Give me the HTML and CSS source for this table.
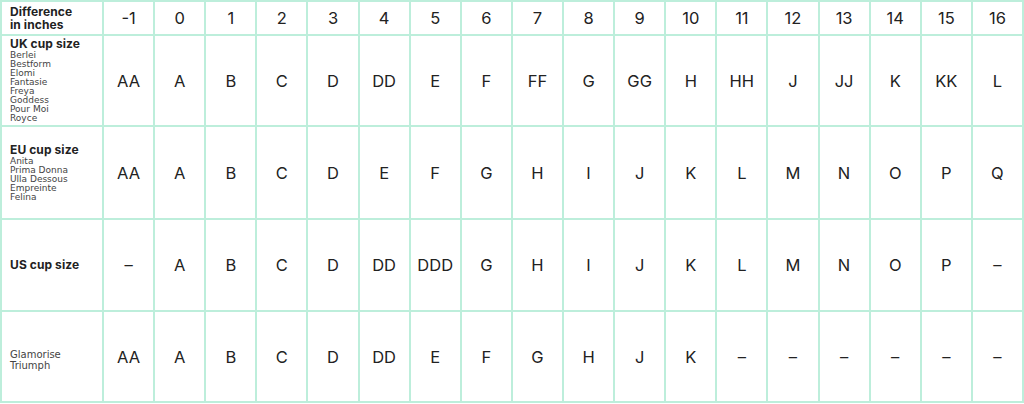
FILE: index.html
```html
<!DOCTYPE html>
<html>
<head>
<meta charset="utf-8">
<link rel="stylesheet" href="styles.css">
</head>
<body>
<table class="sizes">
  <colgroup><col class="label-col"></colgroup>
  <tr class="head">
    <th class="label"><span class="title">Difference<br>in inches</span></th>
    <td>-1</td><td>0</td><td>1</td><td>2</td><td>3</td><td>4</td><td>5</td><td>6</td><td>7</td><td>8</td><td>9</td><td>10</td><td>11</td><td>12</td><td>13</td><td>14</td><td>15</td><td>16</td>
  </tr>
  <tr class="row r1">
    <th class="label"><span class="title">UK cup size</span><span class="brands">Berlei<br>Bestform<br>Elomi<br>Fantasie<br>Freya<br>Goddess<br>Pour Moi<br>Royce</span></th>
    <td>AA</td><td>A</td><td>B</td><td>C</td><td>D</td><td>DD</td><td>E</td><td>F</td><td>FF</td><td>G</td><td>GG</td><td>H</td><td>HH</td><td>J</td><td>JJ</td><td>K</td><td>KK</td><td>L</td>
  </tr>
  <tr class="row r2">
    <th class="label"><span class="title">EU cup size</span><span class="brands">Anita<br>Prima Donna<br>Ulla Dessous<br>Empreinte<br>Felina</span></th>
    <td>AA</td><td>A</td><td>B</td><td>C</td><td>D</td><td>E</td><td>F</td><td>G</td><td>H</td><td>I</td><td>J</td><td>K</td><td>L</td><td>M</td><td>N</td><td>O</td><td>P</td><td>Q</td>
  </tr>
  <tr class="row r3">
    <th class="label"><span class="title">US cup size</span></th>
    <td>–</td><td>A</td><td>B</td><td>C</td><td>D</td><td>DD</td><td>DDD</td><td>G</td><td>H</td><td>I</td><td>J</td><td>K</td><td>L</td><td>M</td><td>N</td><td>O</td><td>P</td><td>–</td>
  </tr>
  <tr class="row r4">
    <th class="label"><span class="brands">Glamorise<br>Triumph</span></th>
    <td>AA</td><td>A</td><td>B</td><td>C</td><td>D</td><td>DD</td><td>E</td><td>F</td><td>G</td><td>H</td><td>J</td><td>K</td><td>–</td><td>–</td><td>–</td><td>–</td><td>–</td><td>–</td>
  </tr>
</table>
</body>
</html>
```
FILE: styles.css
```css
html, body {
  margin: 0;
  padding: 0;
  background: #ffffff;
}
.sizes {
  width: 1024px;
  border-collapse: collapse;
  table-layout: fixed;
  font-family: "Inter", "Liberation Sans", sans-serif;
  color: #222222;
}
.label-col {
  width: 102px;
}
.sizes th,
.sizes td {
  border: 2px solid #bdeedb;
  padding: 0;
}
.sizes td {
  text-align: center;
  vertical-align: middle;
  font-size: 16.5px;
  font-weight: 400;
}
.sizes th.label {
  text-align: left;
  vertical-align: middle;
  padding: 0 2px 0 8px;
  font-weight: 400;
}
.head {
  height: 34px;
}
.r1 { height: 91px; }
.r2 { height: 93px; }
.r3 { height: 92px; }
.r4 { height: 91px; }
.title {
  display: block;
  font-size: 12px;
  line-height: 12px;
  font-weight: 700;
  color: #222222;
  letter-spacing: 0.1px;
}
.head .title {
  line-height: 13px;
}
.brands {
  display: block;
  font-family: "DejaVu Sans", "Inter", sans-serif;
  font-size: 9px;
  line-height: 9px;
  color: #444444;
}
.r1 .title,
.r2 .title {
  margin-bottom: 1px;
}
.r4 .brands {
  padding-top: 6px;
  font-size: 10px;
  line-height: 11px;
}
```
